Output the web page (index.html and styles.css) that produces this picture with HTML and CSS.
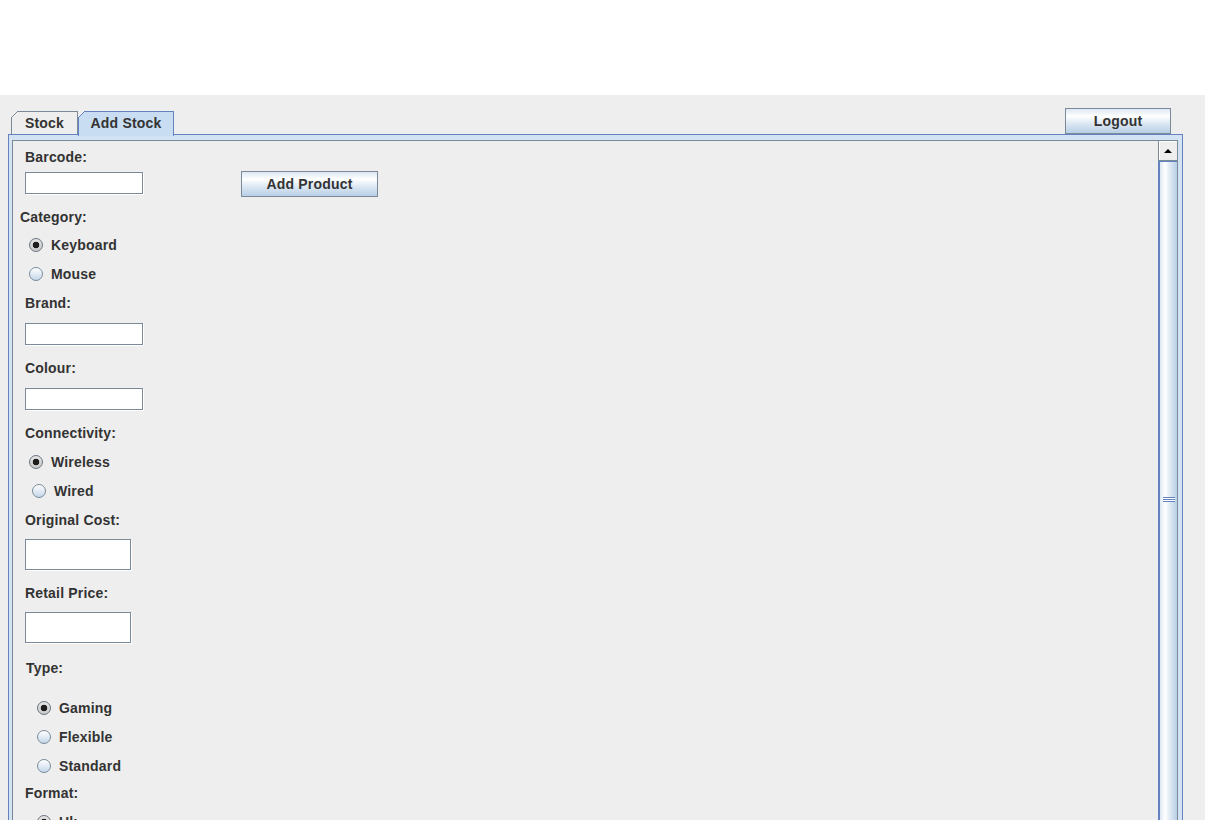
FILE: index.html
```html
<!DOCTYPE html>
<html lang="en">
<head>
  <meta charset="UTF-8" />
  <meta name="viewport" content="width=device-width, initial-scale=1.0"/>
  <title>Stock Manager</title>
  <link rel="stylesheet" href="styles.css">
</head>
<body>
  <div class="top-space"></div>

  <div class="window">
    <div class="tab-header">
      <div class="tab">Stock</div>
      <div class="tab tab-selected">Add Stock</div>
      <button class="btn btn-logout" type="button">Logout</button>
    </div>

    <div class="tab-content">
      <div class="scroll-pane">
        <div class="viewport">
          <form class="stock-form">
            <div class="label label-first">Barcode:</div>
            <div class="barcode-row">
              <input class="field" type="text">
              <button class="btn btn-add" type="button">Add Product</button>
            </div>

            <div class="label label-category">Category:</div>
            <label class="radio radio-first"><span class="radio-dot checked"></span>Keyboard</label>
            <label class="radio"><span class="radio-dot"></span>Mouse</label>

            <div class="label label-after-radio">Brand:</div>
            <input class="field" type="text">

            <div class="label">Colour:</div>
            <input class="field" type="text">

            <div class="label">Connectivity:</div>
            <label class="radio"><span class="radio-dot checked"></span>Wireless</label>
            <label class="radio radio-wired"><span class="radio-dot"></span>Wired</label>

            <div class="label label-after-radio">Original Cost:</div>
            <input class="field field-tall" type="text">

            <div class="label">Retail Price:</div>
            <input class="field field-tall" type="text">

            <div class="label label-type">Type:</div>
            <label class="radio radio-type radio-spaced"><span class="radio-dot checked"></span>Gaming</label>
            <label class="radio radio-type"><span class="radio-dot"></span>Flexible</label>
            <label class="radio radio-type"><span class="radio-dot"></span>Standard</label>

            <div class="label label-format">Format:</div>
            <label class="radio radio-type"><span class="radio-dot checked"></span>Uk</label>
          </form>
        </div>

        <div class="scrollbar">
          <div class="scroll-arrow"><span class="arrow-up"></span></div>
          <div class="scroll-thumb"><span class="grip"></span></div>
        </div>
      </div>
    </div>
  </div>
</body>
</html>
```

FILE: styles.css
```css
html, body {
  height: 100%;
}

body {
  margin: 0;
  overflow: hidden;
  background-color: #ffffff;
  font-family: 'Liberation Sans', Arial, sans-serif;
  font-size: 14px;
  font-weight: bold;
  letter-spacing: 0.18px;
  color: #333333;
}

.top-space {
  height: 95px;
  background-color: #ffffff;
}

.window {
  height: calc(100vh - 95px);
  background-color: #eeeeee;
  display: flex;
  flex-direction: column;
  overflow: hidden;
}

/* Tabs + logout */
.tab-header {
  height: 39px;
  flex: none;
  display: flex;
  align-items: flex-end;
  padding: 0 34px 0 11px;
}

.tab {
  position: relative;
  box-sizing: border-box;
  width: 67px;
  height: 23px;
  border: 1px solid #7a8a99;
  border-bottom: none;
  background-color: #eeeeee;
  text-align: center;
  line-height: 22px;
}

.tab::before {
  content: '';
  position: absolute;
  top: -1px;
  left: -1px;
  width: 7px;
  height: 7px;
  background: linear-gradient(to bottom right, #eeeeee 0 calc(50% - 0.7px), #7a8a99 calc(50% - 0.7px) calc(50% + 0.7px), transparent calc(50% + 0.7px));
}

.tab-selected {
  width: 96px;
  height: 25px;
  margin-bottom: -2px;
  z-index: 1;
  border-color: #6382bf;
  background-color: #c8ddf2;
  line-height: 22px;
}

.tab-selected::before {
  background: linear-gradient(to bottom right, #eeeeee 0 calc(50% - 0.7px), #6382bf calc(50% - 0.7px) calc(50% + 0.7px), transparent calc(50% + 0.7px));
}

.btn {
  box-sizing: border-box;
  height: 26px;
  padding: 0;
  border: 1px solid #7a8a99;
  background: linear-gradient(#dde8f3 0%, #ffffff 30%, #dde8f3 60%, #b8cfe5 100%);
  font: inherit;
  letter-spacing: inherit;
  color: #333333;
  cursor: pointer;
}

.btn-logout {
  width: 106px;
  margin-left: auto;
}

.btn-add {
  width: 137px;
}

/* Tab content frame */
.tab-content {
  flex: 1;
  min-height: 0;
  display: flex;
  flex-direction: column;
  width: 1175px;
  box-sizing: border-box;
  margin-left: 8px;
  padding: 5px 4px 0 3px;
  border: 1px solid #6382bf;
  border-bottom: none;
  background-color: #d3e3f4;
}

.scroll-pane {
  flex: 1;
  min-height: 0;
  display: flex;
  border: 1px solid #7a8a99;
  border-bottom: none;
  background-color: #eeeeee;
  overflow: hidden;
}

.viewport {
  flex: 1;
  overflow: hidden;
}

/* Scrollbar */
.scrollbar {
  width: 19px;
  flex: none;
  display: flex;
  flex-direction: column;
}

.scroll-arrow {
  box-sizing: border-box;
  height: 20px;
  flex: none;
  display: flex;
  align-items: center;
  justify-content: center;
  border-left: 1px solid #7a8a99;
  border-bottom: 1px solid #7a8a99;
  background-color: #eeeeee;
  box-shadow: inset 1px 1px 0 #ffffff;
}

.arrow-up {
  width: 0;
  height: 0;
  border-left: 4px solid transparent;
  border-right: 4px solid transparent;
  border-bottom: 4px solid #000000;
}

.scroll-thumb {
  box-sizing: border-box;
  height: 676px;
  flex: none;
  display: flex;
  align-items: center;
  justify-content: center;
  border-left: 2px solid #6382bf;
  border-top: 1px solid #6382bf;
  background: linear-gradient(to right, #dde8f3 0%, #ffffff 30%, #dde8f3 60%, #b8cfe5 100%);
}

.grip {
  width: 12px;
  height: 5px;
  background: linear-gradient(#6382bf 0 1px, #ffffff 1px 2px, #6382bf 2px 3px, #ffffff 3px 4px, #6382bf 4px 5px);
}

/* Form */
.stock-form {
  margin: 0;
  padding: 0;
}

.label {
  margin: 15px 0 0 12px;
  line-height: 17px;
}

.label-first {
  margin-top: 8px;
}

.label-category {
  margin: 12px 0 0 7px;
}

.label-after-radio {
  margin-top: 12px;
}

.label-type {
  margin: 17px 0 0 13px;
}

.label-format {
  margin-top: 10px;
}

.barcode-row {
  display: flex;
  align-items: flex-start;
  gap: 98px;
  margin: 5px 0 0 12px;
}

.barcode-row .field {
  margin: 1px 0 0 0;
}

.field {
  display: block;
  box-sizing: border-box;
  width: 118px;
  height: 22px;
  margin: 11px 0 0 12px;
  padding: 0 3px;
  border: 1px solid #7a8a99;
  box-shadow: 1px 1px 0 #ffffff;
  background-color: #ffffff;
  font: inherit;
  outline: none;
}

.field-tall {
  width: 106px;
  height: 31px;
  margin-top: 10px;
}

.radio {
  display: flex;
  align-items: center;
  gap: 8px;
  box-sizing: border-box;
  height: 20px;
  padding-top: 2px;
  margin: 9px 0 0 16px;
}

.radio-first {
  margin-top: 8px;
}

.radio-wired {
  margin-left: 19px;
}

.radio-type {
  margin-left: 24px;
}

.radio-spaced {
  margin-top: 20px;
}

.radio-dot {
  box-sizing: border-box;
  width: 14px;
  height: 14px;
  flex: none;
  border-radius: 50%;
  border: 1px solid #7a8a99;
  background: linear-gradient(#ffffff, #c4d6ea);
}

.radio-dot.checked {
  border-color: #6b7582;
  background: radial-gradient(circle, #1e1e1e 0 3px, transparent 3.6px), linear-gradient(#e4e4e4, #c9c9c9);
}
```
